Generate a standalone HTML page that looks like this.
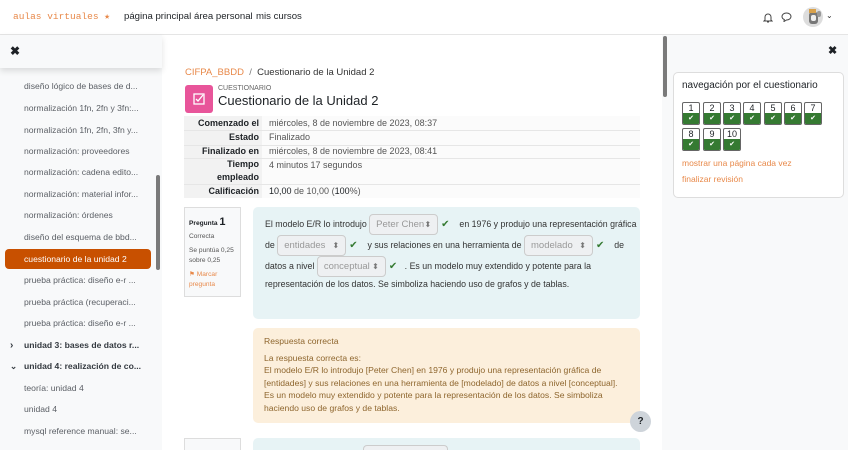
<!DOCTYPE html>
<html><head><meta charset="utf-8"><style>
*{box-sizing:border-box;margin:0;padding:0}
html,body{width:848px;height:450px;overflow:hidden}
body{background:#fff;font-family:"Liberation Sans",sans-serif;color:#1d2125;position:relative}
.a{position:absolute;white-space:nowrap}
.w{white-space:normal}
.hdr{left:0;top:0;width:848px;height:35px;border-bottom:1px solid #e5e5e5;background:#fff}
.logo{left:13px;top:11px;font-family:"Liberation Mono",monospace;font-size:9.5px;color:#e8894a}
.nav{top:11px;font-size:9.6px;color:#1d2125}
.left{left:0;top:35px;width:162px;height:415px;background:#f8f9fa}
.ltop{left:0;top:35px;width:162px;height:33px;background:#f8f9fa;box-shadow:0 3px 6px rgba(0,0,0,.12);z-index:2}
.si{left:24px;font-size:8.6px;color:#5c6066}
.sb{font-weight:bold;color:#343a40}
.act{left:5px;top:249px;width:146px;height:20px;background:#c85000;border-radius:4px}
.right{left:662px;top:35px;width:186px;height:415px;background:#f8f9fa}
.t{font-size:9px;color:#555}
.lbl{width:78px;text-align:right;font-weight:bold;font-size:9px;color:#1d2125;background:#f2f2f2}
.qb{width:18px;height:23px;border:1px solid #666;border-radius:2px;background:#fff;font-size:9px;text-align:center;overflow:hidden}
.qb div{height:11px;line-height:11px}
.qb .g{position:absolute;left:0;bottom:0;width:100%;height:11px;background:#357a32;color:#fff;font-size:7px;line-height:11px}
.sel{display:inline-block;width:69px;border:1px solid #ccc;border-radius:4px;background:#eef0f2;color:#999;font-size:9.5px;padding:2px 6px;height:21px;line-height:15px;vertical-align:middle;position:relative}
.sel:after{content:"⬍";position:absolute;right:6px;top:2px;font-size:8px;color:#777}
.ck{color:#357a32;font-size:10px;margin:0 5px 0 3px}
.ql{font-size:8.8px;color:#333;height:21px;line-height:21px}
</style></head><body>
<div class="a hdr"></div>
<div class="a logo">aulas virtuales ★</div>
<div class="a nav" style="left:124px">página principal</div>
<div class="a nav" style="left:194px">área personal</div>
<div class="a nav" style="left:256px">mis cursos</div>
<svg class="a" style="left:763px;top:12px" width="10" height="11" viewBox="0 0 10 11"><path d="M2 8V5a3 3 0 016 0v3l1 1H1zM4 10h2" fill="none" stroke="#444" stroke-width="1"/></svg>
<svg class="a" style="left:781px;top:12px" width="11" height="10" viewBox="0 0 11 10"><path d="M5.5 1C8 1 10 2.5 10 4.5S8 8 5.5 8L3 9.5 3.3 7.5C2 7 1 6 1 4.5 1 2.5 3 1 5.5 1z" fill="none" stroke="#444" stroke-width="1"/></svg>
<div class="a" style="left:803px;top:7px;width:20px;height:20px;border-radius:50%;background:#ddd"><div class="a" style="left:6px;top:5px;width:9px;height:12px;background:#777;border-radius:3px"></div><div class="a" style="left:8px;top:8px;width:5px;height:6px;background:#eee;border-radius:2px"></div><div class="a" style="left:6px;top:2px;width:7px;height:4px;background:#d9a14a"></div><div class="a" style="left:14px;top:4px;width:4px;height:6px;background:#999;border-radius:2px"></div></div>
<div class="a" style="left:826px;top:11px;font-size:8px;color:#333">⌄</div>

<div class="a left"></div>
<div class="a ltop"><div class="a" style="left:10px;top:9px;font-size:12px;font-weight:bold">✖</div></div>
<div class="a" style="left:156px;top:175px;width:4px;height:95px;background:#7a7a7a;border-radius:2px"></div>
<div class="a si" style="top:81px">diseño lógico de bases de d...</div>
<div class="a si" style="top:103px">normalización 1fn, 2fn y 3fn:...</div>
<div class="a si" style="top:125px">normalización 1fn, 2fn, 3fn y...</div>
<div class="a si" style="top:146px">normalización: proveedores</div>
<div class="a si" style="top:167px">normalización: cadena edito...</div>
<div class="a si" style="top:189px">normalización: material infor...</div>
<div class="a si" style="top:210px">normalización: órdenes</div>
<div class="a si" style="top:232px">diseño del esquema de bbd...</div>
<div class="a act"></div>
<div class="a si" style="top:254px;color:#fff">cuestionario de la unidad 2</div>
<div class="a si" style="top:275px">prueba práctica: diseño e-r ...</div>
<div class="a si" style="top:297px">prueba práctica (recuperaci...</div>
<div class="a si" style="top:318px">prueba práctica: diseño e-r ...</div>
<div class="a si sb" style="top:340px;left:10px;font-size:10px">›</div>
<div class="a si sb" style="top:340px">unidad 3: bases de datos r...</div>
<div class="a si sb" style="top:361px;left:10px">⌄</div>
<div class="a si sb" style="top:361px">unidad 4: realización de co...</div>
<div class="a si" style="top:383px">teoría: unidad 4</div>
<div class="a si" style="top:404px">unidad 4</div>
<div class="a si" style="top:426px">mysql reference manual: se...</div>

<div class="a" style="left:185px;top:67px;font-size:9.5px;color:#e8894a">CIFPA_BBDD <span style="color:#777">&nbsp;/&nbsp;</span> <span style="color:#333">Cuestionario de la Unidad 2</span></div>
<div class="a" style="left:185px;top:85px;width:28px;height:28px;background:#e8559a;border-radius:3px"><svg width="28" height="28"><rect x="9" y="9" width="10" height="10" fill="none" stroke="#fff" stroke-width="1.3"/><path d="M11 14l2 2 5-6" fill="none" stroke="#fff" stroke-width="1.3"/></svg></div>
<div class="a" style="left:218px;top:85px;font-size:7px;color:#666">CUESTIONARIO</div>
<div class="a" style="left:218px;top:93px;font-size:13px;color:#1d2125">Cuestionario de la Unidad 2</div>

<div class="a" style="left:184px;top:116px;width:456px;height:82px;background:#fbfbfb"></div>
<div class="a lbl" style="left:184px;top:116px;height:14px;line-height:14px;padding-right:3px">Comenzado el</div>
<div class="a lbl" style="left:184px;top:130px;height:15px;line-height:15px;padding-right:3px">Estado</div>
<div class="a lbl" style="left:184px;top:145px;height:13px;line-height:13px;padding-right:3px">Finalizado en</div>
<div class="a lbl" style="left:184px;top:158px;height:26px;line-height:13px;padding-right:3px">Tiempo<br>empleado</div>
<div class="a lbl" style="left:184px;top:184px;height:14px;line-height:14px;padding-right:3px">Calificación</div>
<div class="a" style="left:184px;top:130px;width:456px;border-top:1px solid #e6e6e6"></div>
<div class="a" style="left:184px;top:145px;width:456px;border-top:1px solid #e6e6e6"></div>
<div class="a" style="left:184px;top:158px;width:456px;border-top:1px solid #e6e6e6"></div>
<div class="a" style="left:184px;top:184px;width:456px;border-top:1px solid #e6e6e6"></div>
<div class="a t" style="left:269px;top:118px">miércoles, 8 de noviembre de 2023, 08:37</div>
<div class="a t" style="left:269px;top:132px">Finalizado</div>
<div class="a t" style="left:269px;top:146px">miércoles, 8 de noviembre de 2023, 08:41</div>
<div class="a t" style="left:269px;top:160px">4 minutos 17 segundos</div>
<div class="a t" style="left:269px;top:186px"><span style="color:#1d2125">10,00</span> de 10,00 (<span style="color:#1d2125">100</span>%)</div>

<div class="a w" style="left:184px;top:207px;width:57px;height:90px;border:1px solid #ddd;background:#f8f9fa;padding:5px 4px;font-size:6.6px;color:#555;line-height:10px">
<div style="color:#1d2125;font-weight:bold;margin-top:4px">Pregunta <span style="font-size:11px">1</span></div>
<div style="margin-top:3px">Correcta</div>
<div style="margin-top:4px">Se puntúa 0,25 sobre 0,25</div>
<div style="margin-top:4px;color:#e8894a">⚑ Marcar pregunta</div></div>

<div class="a" style="left:253px;top:207px;width:387px;height:112px;background:#e7f3f5;border-radius:5px"></div>
<div class="a ql" style="left:265px;top:214px">El modelo E/R lo introdujo <span class="sel">Peter Chen</span><span class="ck">✔</span> &nbsp;en 1976 y produjo una representación gráfica</div>
<div class="a ql" style="left:265px;top:235px">de <span class="sel">entidades</span><span class="ck">✔</span> &nbsp;y sus relaciones en una herramienta de <span class="sel">modelado</span><span class="ck">✔</span> &nbsp;de</div>
<div class="a ql" style="left:265px;top:256px">datos a nivel <span class="sel">conceptual</span><span class="ck">✔</span> . Es un modelo muy extendido y potente para la</div>
<div class="a ql" style="left:265px;top:274px">representación de los datos. Se simboliza haciendo uso de grafos y de tablas.</div>

<div class="a w" style="left:253px;top:328px;width:387px;height:95px;background:#fcefdc;border-radius:5px;padding:7px 11px;font-size:8.6px;color:#8e662e;line-height:12.5px">
<div>Respuesta correcta</div>
<div style="margin-top:4px">La respuesta correcta es:<br>El modelo E/R lo introdujo [Peter Chen] en 1976 y produjo una representación gráfica de [entidades] y sus relaciones en una herramienta de [modelado] de datos a nivel [conceptual]. Es un modelo muy extendido y potente para la representación de los datos. Se simboliza haciendo uso de grafos y de tablas.</div></div>

<div class="a" style="left:184px;top:438px;width:57px;height:12px;border:1px solid #ddd;border-bottom:none;background:#f8f9fa"></div>
<div class="a" style="left:253px;top:438px;width:387px;height:12px;background:#e7f3f5;border-radius:5px 5px 0 0"></div>
<div class="a" style="left:363px;top:445px;width:85px;height:5px;border:1px solid #ccc;border-bottom:none;border-radius:4px 4px 0 0;background:#eef0f2"></div>
<div class="a" style="left:630px;top:411px;width:21px;height:21px;border-radius:50%;background:#ced4da;font-size:10px;font-weight:bold;text-align:center;line-height:21px">?</div>

<div class="a right"></div>
<div class="a" style="left:663px;top:36px;width:4px;height:61px;background:#7a7a7a;border-radius:2px"></div>
<div class="a" style="left:828px;top:44px;font-size:11px;font-weight:bold">✖</div>
<div class="a" style="left:673px;top:72px;width:171px;height:126px;background:#fff;border:1px solid #ddd;border-radius:5px"></div>
<div class="a" style="left:682px;top:80px;font-size:10px;color:#1d2125">navegación por el cuestionario</div>
<div class="a qb" style="left:682px;top:102px"><div>1</div><div class="g">✔</div></div>
<div class="a qb" style="left:703px;top:102px"><div>2</div><div class="g">✔</div></div>
<div class="a qb" style="left:723px;top:102px"><div>3</div><div class="g">✔</div></div>
<div class="a qb" style="left:743px;top:102px"><div>4</div><div class="g">✔</div></div>
<div class="a qb" style="left:764px;top:102px"><div>5</div><div class="g">✔</div></div>
<div class="a qb" style="left:784px;top:102px"><div>6</div><div class="g">✔</div></div>
<div class="a qb" style="left:804px;top:102px"><div>7</div><div class="g">✔</div></div>
<div class="a qb" style="left:682px;top:128px"><div>8</div><div class="g">✔</div></div>
<div class="a qb" style="left:703px;top:128px"><div>9</div><div class="g">✔</div></div>
<div class="a qb" style="left:723px;top:128px"><div>10</div><div class="g">✔</div></div>
<div class="a" style="left:682px;top:158px;font-size:8.5px;color:#e8894a">mostrar una página cada vez</div>
<div class="a" style="left:682px;top:174px;font-size:8.5px;color:#e8894a">finalizar revisión</div>
</body></html>
